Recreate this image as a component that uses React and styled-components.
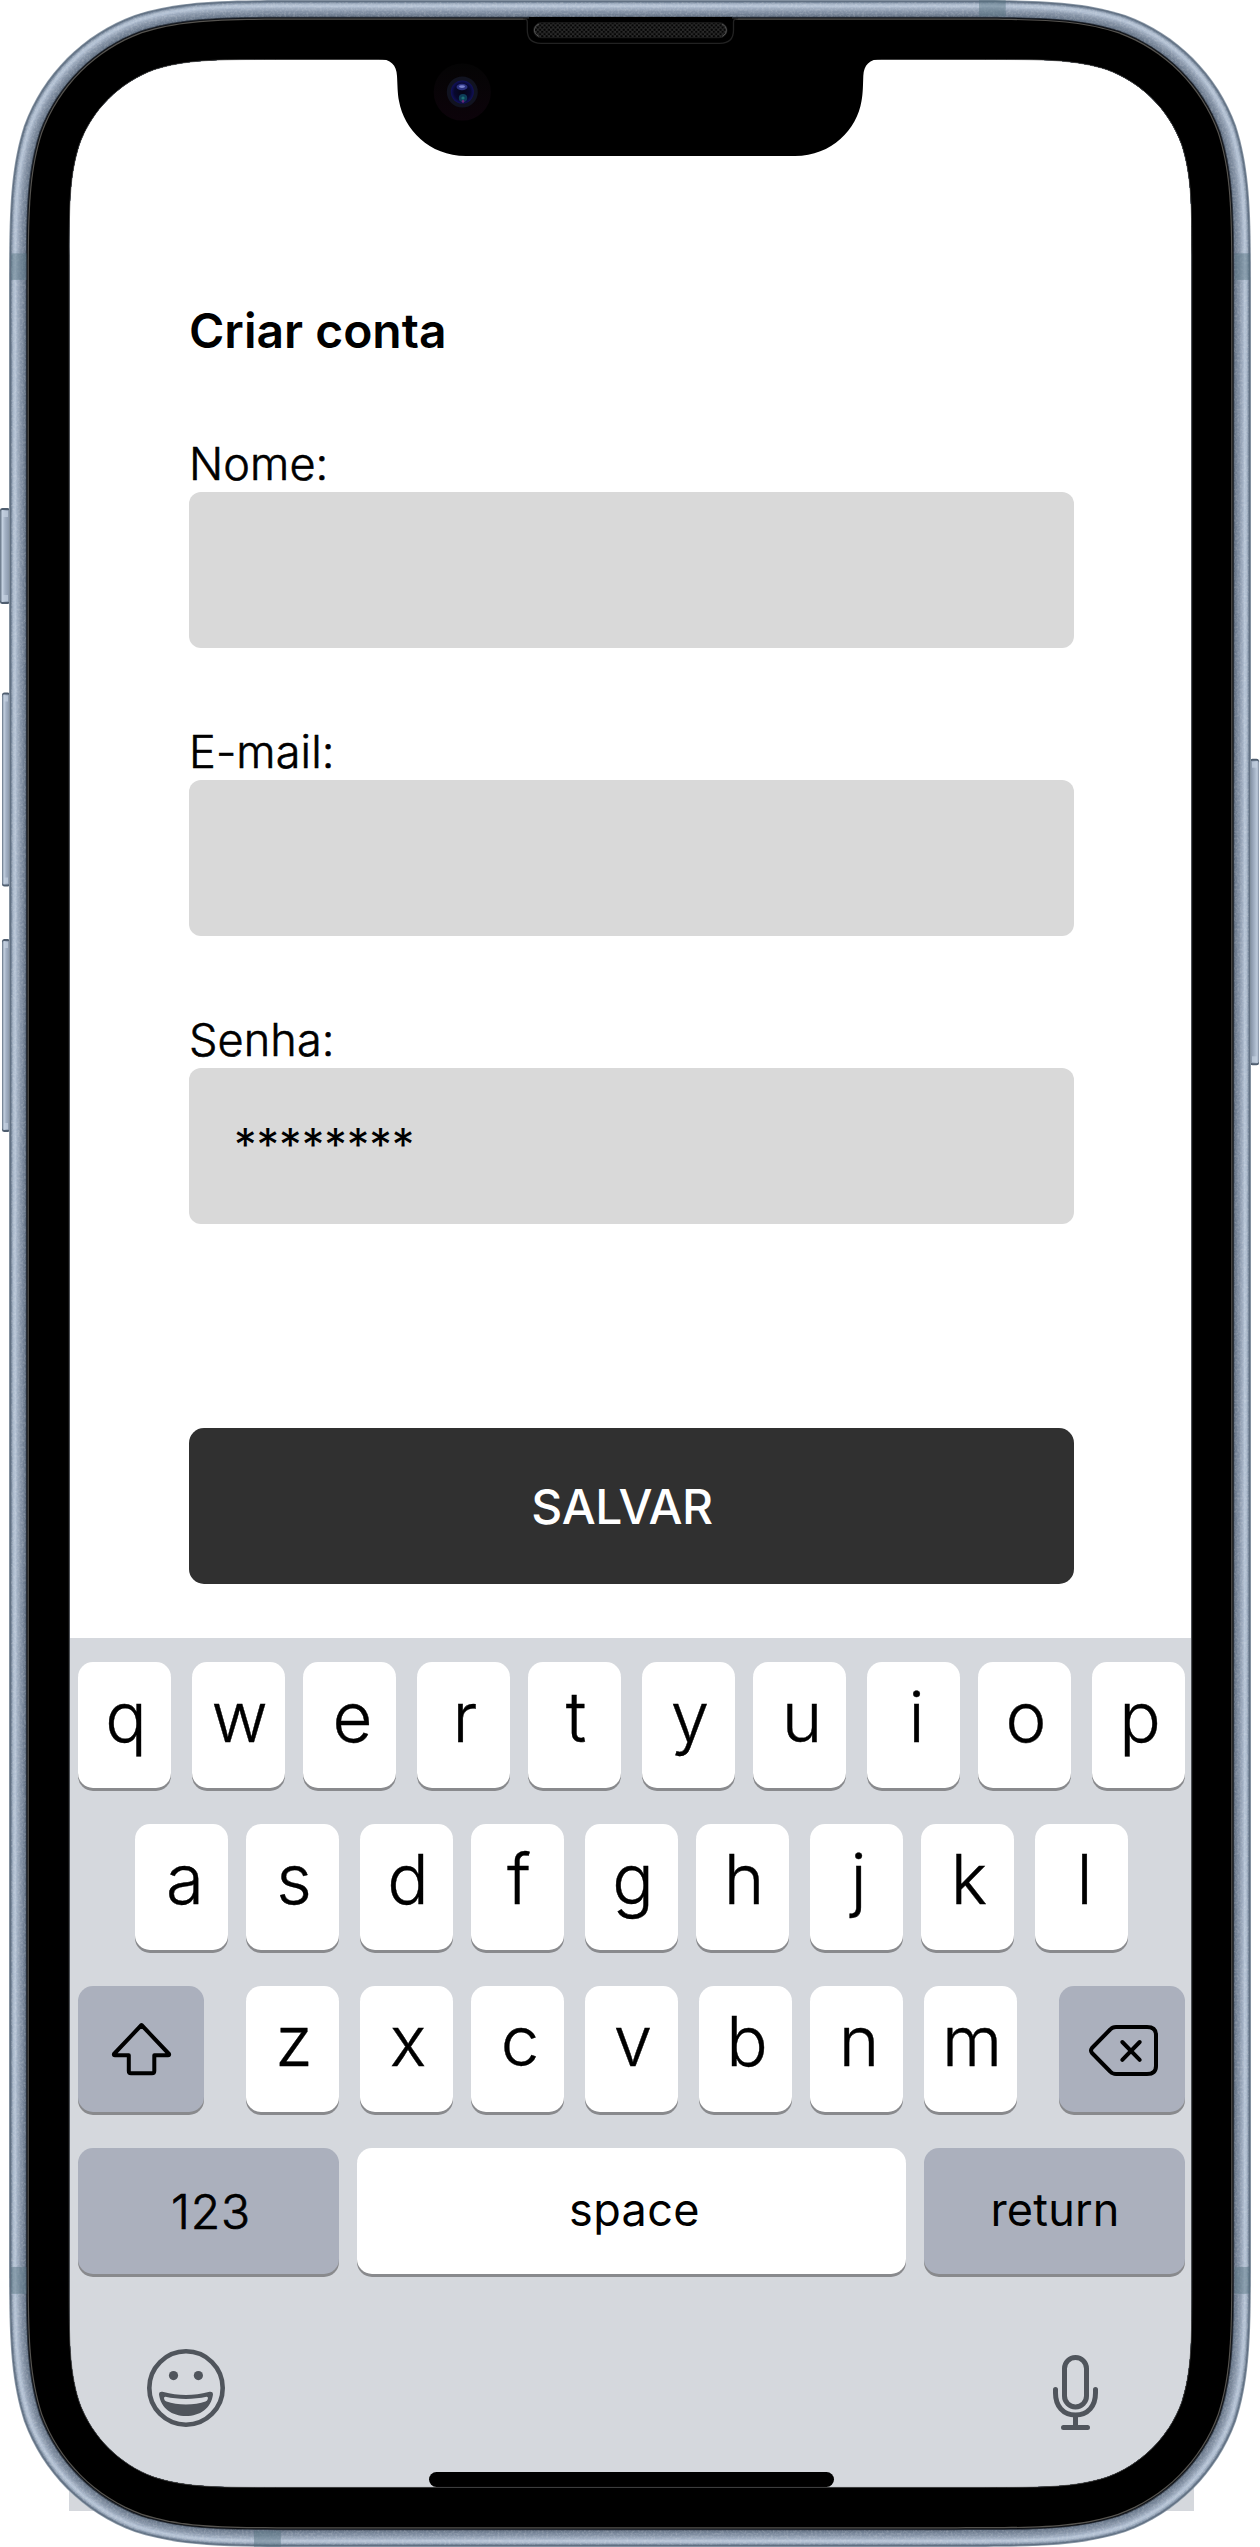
import React from "react";
import styled, { createGlobalStyle } from "styled-components";

const GlobalStyle = createGlobalStyle`
  *, *::before, *::after { box-sizing: border-box; }
  body { margin: 0; background: #fff; }
`;

const font = `Inter, "Liberation Sans", sans-serif`;

const Device = styled.main`
  position: relative;
  width: 1260px;
  height: 2547px;
  padding: 0 66px 0 69px;
  overflow: hidden;
  background: #fff;
  color: #000;
  font-family: ${font};
`;

const Screen = styled.div`
  display: flex;
  flex-direction: column;
  width: 1125px;
  height: 2511px;
`;

const Form = styled.form`
  display: flex;
  flex-direction: column;
  gap: 77px;
  height: 1638px;
  padding: 302px 120px 0;
`;

const Title = styled.h1`
  margin: 0;
  font-size: 48px;
  font-weight: 600;
  line-height: 58px;
`;

const Field = styled.label`
  display: flex;
  flex-direction: column;
`;

const FieldLabel = styled.span`
  height: 55px;
  font-size: 45px;
  font-weight: 300;
  line-height: 53px;
  letter-spacing: 0.1px;
  -webkit-text-stroke: 0.6px currentColor;
`;

const FieldBox = styled.span`
  display: flex;
  align-items: center;
  height: 156px;
  padding: 0 0 4px 45px;
  border-radius: 12px;
  background: #d9d9d9;
  font-size: 45px;
  font-weight: 400;
  line-height: 55px;
`;

const SaveButton = styled.button`
  height: 156px;
  margin: 127px 0 0;
  padding: 2px 19px 0 0;
  border: 0;
  border-radius: 15px;
  background: #303030;
  color: #fff;
  font-family: inherit;
  font-size: 48px;
  font-weight: 500;
  line-height: 58px;
  letter-spacing: -0.5px;
`;

const Keyboard = styled.section`
  display: flex;
  flex-direction: column;
  gap: 36px;
  height: 873px;
  padding: 24px 9px 0;
  background: #d5d8dd;
`;

const KeyRow = styled.div`
  display: flex;
  height: 126px;
  padding-left: ${(p) => p.$indent || 0}px;
`;

const Key = styled.button`
  display: flex;
  flex: none;
  justify-content: center;
  align-items: ${(p) => (p.$icon ? "center" : "flex-start")};
  width: ${(p) => p.$width || 93}px;
  height: 126px;
  margin: 0 0 0 ${(p) => p.$before || 0}px;
  padding: ${(p) => p.$top || 0}px 0 0 ${(p) => p.$shift || 0}px;
  border: 0;
  border-radius: 15px;
  background: ${(p) => (p.$dark ? "#abb0bd" : "#fff")};
  box-shadow: 0 3px 0 #898a8d;
  color: #000;
  font-family: inherit;
  font-size: ${(p) => p.$size || 69}px;
  font-weight: ${(p) => p.$weight || 300};
  letter-spacing: ${(p) => p.$spacing || 0}px;
  line-height: 1.21;
  -webkit-text-stroke: ${(p) => p.$stroke || 0}px currentColor;
`;

const KeyboardFooter = styled.div`
  display: flex;
  justify-content: space-between;
  align-items: flex-end;
  height: 120px;
  padding: 39px 87px 0 69px;
`;

const HomeIndicator = styled.div`
  align-self: center;
  width: 405px;
  height: 15px;
  margin-top: 6px;
  border-radius: 8px;
  background: #000;
`;

const Frame = styled.svg`
  position: absolute;
  inset: 0;
  pointer-events: none;
`;

const Icon = styled.svg`
  display: block;
  flex: none;
  margin-bottom: ${(p) => p.$lift || 0}px;
  overflow: visible;
`;

/* Rounded rectangle with continuous-curvature corners. */
function squircle(x0, y0, x1, y1, r) {
  const a = 1.52866 * r, b = 1.08849 * r, c = 0.86841 * r;
  const d = 0.63149 * r, e = 0.07491 * r, f = 0.37282 * r, g = 0.16906 * r;
  return [
    `M${x0 + a} ${y0} H${x1 - a}`,
    `C${x1 - b} ${y0} ${x1 - c} ${y0} ${x1 - d} ${y0 + e}`,
    `C${x1 - f} ${y0 + g} ${x1 - g} ${y0 + f} ${x1 - e} ${y0 + d}`,
    `C${x1} ${y0 + c} ${x1} ${y0 + b} ${x1} ${y0 + a} V${y1 - a}`,
    `C${x1} ${y1 - b} ${x1} ${y1 - c} ${x1 - e} ${y1 - d}`,
    `C${x1 - g} ${y1 - f} ${x1 - f} ${y1 - g} ${x1 - d} ${y1 - e}`,
    `C${x1 - c} ${y1} ${x1 - b} ${y1} ${x1 - a} ${y1} H${x0 + a}`,
    `C${x0 + b} ${y1} ${x0 + c} ${y1} ${x0 + d} ${y1 - e}`,
    `C${x0 + f} ${y1 - g} ${x0 + g} ${y1 - f} ${x0 + e} ${y1 - d}`,
    `C${x0} ${y1 - c} ${x0} ${y1 - b} ${x0} ${y1 - a} V${y0 + a}`,
    `C${x0} ${y0 + b} ${x0} ${y0 + c} ${x0 + e} ${y0 + d}`,
    `C${x0 + g} ${y0 + f} ${x0 + f} ${y0 + g} ${x0 + d} ${y0 + e}`,
    `C${x0 + c} ${y0} ${x0 + b} ${y0} ${x0 + a} ${y0}Z`,
  ].join(" ");
}

const bands = [
  [0, "#8d9aa8"], [0.8, "#617082"], [2, "#76869a"], [3, "#98a7ba"], [4.2, "#b0bed0"],
  [5.6, "#b5c3d5"], [7, "#a9b7ca"], [8.3, "#9ba9bc"], [9.7, "#909eb1"], [11, "#8593a6"],
  [12.5, "#7c8a9d"], [14, "#728093"], [15.5, "#687689"], [16.8, "#2a323d"],
  [17.8, "#0c0e12"], [18.6, "#55534f"], [19.8, "#000"],
];

const screenPath = squircle(69.2, 59.5, 1191.8, 2487.4, 135);
const notchPath =
  "M378 59 C391 59 396.5 65 397 76 C397.5 84 397.5 94 399 101 C404 129 429 156 466 156 H795 C832 156 857 129 861.5 101 C863 94 863 84 863.3 76 C864 65 869 59 882 59Z";

const antennas = [
  [11, 253.3, 15.5, 26.6], [1234.5, 253.3, 15.5, 26.6],
  [11, 2267, 15.5, 26.8], [1234.5, 2267, 15.5, 26.8],
  [979, 0, 26.7, 16.5], [254, 2530.5, 26.8, 16.5],
];

const sideButtons = [
  { x: 0, y: 508, w: 10, h: 96 },
  { x: 2, y: 692.5, w: 8, h: 194 },
  { x: 2, y: 939, w: 8, h: 193 },
  { x: 1250, y: 758.7, w: 9, h: 306.6, right: true },
];

function PhoneFrame() {
  return (
    <Frame width="1260" height="2547" viewBox="0 0 1260 2547" aria-hidden="true">
      <defs>
        <clipPath id="body">
          <path clipRule="evenodd" d={`M0 0H1260V2547H0Z ${screenPath}`} />
        </clipPath>
        <clipPath id="metal">
          <path clipRule="evenodd" d={`${squircle(11, 2, 1249, 2545, 197)} ${squircle(26, 17, 1234, 2530, 182)}`} />
        </clipPath>
        <linearGradient id="leftButton" x1="0" x2="1" y1="0" y2="0">
          <stop offset="0" stopColor="#5f6e7f" />
          <stop offset=".25" stopColor="#c3d0e0" />
          <stop offset=".5" stopColor="#a4b2c5" />
          <stop offset="1" stopColor="#8593a6" />
        </linearGradient>
        <linearGradient id="rightButton" x1="0" x2="1" y1="0" y2="0">
          <stop offset="0" stopColor="#7f8da0" />
          <stop offset=".5" stopColor="#a4b2c5" />
          <stop offset=".8" stopColor="#becbdc" />
          <stop offset="1" stopColor="#7d8b9d" />
        </linearGradient>
        <filter id="grain" x="0" y="0" width="100%" height="100%">
          <feTurbulence type="fractalNoise" baseFrequency=".45" numOctaves="2" seed="4" />
          <feColorMatrix values="0 0 0 0 1  0 0 0 0 1  0 0 0 0 1  .9 0 0 0 -.36" />
        </filter>
        <pattern id="mesh" width="4.4" height="4.4" patternUnits="userSpaceOnUse">
          <rect width="4.4" height="4.4" fill="#2b2b2b" />
          <circle cx="1.1" cy="1.1" r="1.2" fill="#040404" />
          <circle cx="3.3" cy="3.3" r="1.2" fill="#040404" />
        </pattern>
        <radialGradient id="lens">
          <stop offset="0" stopColor="#050514" />
          <stop offset=".7" stopColor="#08082e" />
          <stop offset="1" stopColor="#11115c" />
        </radialGradient>
        <linearGradient id="camera" x1="0" x2="0" y1="0" y2="1">
          <stop offset="0" stopColor="#040404" />
          <stop offset="1" stopColor="#0c030a" />
        </linearGradient>
      </defs>

      {sideButtons.map((b) => (
        <g key={b.y}>
          <rect x={b.x} y={b.y} width={b.w} height={b.h} rx="2.5" fill="#4f5e6f" />
          <rect x={b.x} y={b.y + 2} width={b.w} height={b.h - 4} rx="2" fill={`url(#${b.right ? "rightButton" : "leftButton"})`} />
          <rect x={b.x + 2} y={b.y + 3} width={b.w - 4} height="6" fill="#c3d0e0" opacity=".7" />
          <rect x={b.x + 2} y={b.y + b.h - 9} width={b.w - 4} height="6" fill="#c3d0e0" opacity=".7" />
        </g>
      ))}

      <g clipPath="url(#body)">
        {bands.map(([inset, color]) => (
          <path key={inset} fill={color} d={squircle(9 + inset, inset, 1251 - inset, 2547 - inset, 199 - inset)} />
        ))}
        <g clipPath="url(#metal)">
          <rect width="1260" height="2547" filter="url(#grain)" opacity=".45" />
        </g>
      </g>

      {antennas.map(([x, y, w, h]) => (
        <rect key={`${x}-${y}`} x={x} y={y} width={w} height={h} fill="#54707f" opacity=".45" />
      ))}

      <path d={screenPath} fill="none" stroke="#555" strokeWidth=".6" />
      <path d={notchPath} fill="#000" />

      <path d="M523 18.5 Q527.3 18.5 527.3 22 V30 Q527.3 43.3 541 43.3 H720 Q733.5 43.3 733.5 30 V22 Q733.5 18.5 738 18.5" fill="#000" stroke="#222" strokeWidth="1.3" />
      <rect x="529" y="17" width="203" height="6" fill="#000" />
      <rect x="533.7" y="22.7" width="193.3" height="15" rx="7.5" fill="url(#mesh)" stroke="#1d1d1d" />
      <path d="M539 24 Q534.5 26 534.5 30.2 T539 36.4 M722 24 Q726.3 26 726.3 30.2 T722 36.4" fill="none" stroke="#555" />

      <circle cx="462.3" cy="92" r="28.6" fill="url(#camera)" />
      <circle cx="462.3" cy="92" r="15.5" fill="#111320" />
      <circle cx="462.3" cy="92" r="11.5" fill="url(#lens)" />
      <ellipse cx="462" cy="87" rx="5.5" ry="3.2" fill="#2c3280" />
      <ellipse cx="462" cy="86.6" rx="3" ry="1.3" fill="#7a82cc" />
      <ellipse cx="463" cy="98" rx="4.2" ry="4" fill="#0d3c58" />
      <circle cx="463" cy="98" r="1.6" fill="#1f7074" />
      <circle cx="463" cy="101.4" r="1.3" fill="#6a2a7a" />
    </Frame>
  );
}

const ShiftIcon = () => (
  <Icon width="59" height="52" viewBox="0 0 59 52" fill="none" stroke="#000" strokeWidth="4" strokeLinejoin="round">
    <path d="M29.5 2 L57 31 Q57.5 32.3 56 32.3 H42.3 V48 Q42.3 50.2 40 50.2 H19 Q16.8 50.2 16.8 48 V32.3 H3 Q1.5 32.3 2 31 Z" />
  </Icon>
);

const BackspaceIcon = () => (
  <Icon width="69" height="51" viewBox="0 0 69 51" fill="none" stroke="#000" strokeWidth="4" strokeLinecap="round" strokeLinejoin="round">
    <path d="M27 2 H58 Q67 2 67 10 V41 Q67 49 58 49 H27 Q23.5 49 21.2 46.5 L3 28 Q1 25.5 3 23 L21.2 4.5 Q23.5 2 27 2Z" />
    <path d="M33.3 17 L50.7 34.8 M50.7 17 L33.3 34.8" />
  </Icon>
);

const SmileIcon = () => (
  <Icon $lift={3} width="78" height="78" viewBox="-39 -39 78 78" fill="#50555c">
    <circle r="36.7" fill="none" stroke="#50555c" strokeWidth="4.6" />
    <circle cx="-12.5" cy="-12.4" r="4.6" />
    <circle cx="12.4" cy="-12.4" r="4.6" />
    <path
      fillRule="evenodd"
      d="M-27 6.5 C-27 3.8 -25 3.4 -22.5 4.1 C-8 8 8 8 22.5 4.1 C25 3.4 27 3.8 27 6.5 C25 20.5 14 28 0 28 C-14 28 -25 20.5 -27 6.5Z M-20.5 8.8 C-8 11.6 8 11.6 20.5 8.8 C22.8 8.6 22.2 12.6 19.5 13.6 C9 17.4 -9 17.4 -19.5 13.6 C-22.2 12.6 -22.8 8.6 -20.5 8.8Z"
    />
  </Icon>
);

const MicIcon = () => (
  <Icon width="45" height="75" viewBox="0 0 45 75" fill="none" stroke="#50555c" strokeWidth="5" strokeLinecap="round">
    <rect x="11.5" y="2.5" width="22" height="49.5" rx="11" />
    <path d="M2.5 34.5 V38 C2.5 51 10 60 22.5 60 C35 60 42.5 51 42.5 38 V34.5 M22.5 60 V72 M10.5 72.5 H34.5" />
  </Icon>
);

/* Each letter key: glyph, space before the key, left padding that nudges the glyph. */
const rows = [
  {
    indent: 0,
    keys: [["q", 0, 3], ["w", 21, 2], ["e", 18, 6], ["r", 21, 3], ["t", 18, 3], ["y", 21, 3], ["u", 18, 5], ["i", 21, 6], ["o", 18, 3], ["p", 21, 3]],
  },
  {
    indent: 57,
    keys: [["a", 0, 7], ["s", 18, 3], ["d", 21, 3], ["f", 18, 3], ["g", 21, 3], ["h", 18, 3], ["j", 21, 4], ["k", 18, 3], ["l", 21, 6]],
  },
];
const bottomLetters = [["z", 42, 3], ["x", 21, 3], ["c", 18, 5], ["v", 21, 3], ["b", 21, 3], ["n", 18, 5], ["m", 21, 3]];

const LetterKey = ({ letter, before, shift }) => (
  <Key type="button" $before={before} $top={14} $shift={shift} $stroke={0.4}>{letter}</Key>
);

export default function App() {
  return (
    <>
      <GlobalStyle />
      <Device>
        <Screen>
          <Form>
            <Title>Criar conta</Title>
            <Field>
              <FieldLabel>Nome:</FieldLabel>
              <FieldBox />
            </Field>
            <Field>
              <FieldLabel>E-mail:</FieldLabel>
              <FieldBox />
            </Field>
            <Field>
              <FieldLabel>Senha:</FieldLabel>
              <FieldBox>********</FieldBox>
            </Field>
            <SaveButton type="button">SALVAR</SaveButton>
          </Form>
          <Keyboard>
            {rows.map((row) => (
              <KeyRow key={row.indent} $indent={row.indent}>
                {row.keys.map(([letter, before, shift]) => (
                  <LetterKey key={letter} letter={letter} before={before} shift={shift} />
                ))}
              </KeyRow>
            ))}
            <KeyRow>
              <Key type="button" aria-label="shift" $dark $icon $width={126}><ShiftIcon /></Key>
              {bottomLetters.map(([letter, before, shift]) => (
                <LetterKey key={letter} letter={letter} before={before} shift={shift} />
              ))}
              <Key type="button" aria-label="delete" $dark $icon $width={126} $before={42} $top={3} $shift={3}><BackspaceIcon /></Key>
            </KeyRow>
            <KeyRow>
              <Key type="button" $dark $width={261} $size={48} $top={35} $shift={5} $spacing={0.8} $stroke={0.7}>123</Key>
              <Key type="button" $width={549} $before={18} $size={45} $weight={400} $top={35} $shift={6} $spacing={0.4}>space</Key>
              <Key type="button" $dark $width={261} $before={18} $size={45} $weight={400} $top={35} $shift={1} $spacing={0.2}>return</Key>
            </KeyRow>
            <KeyboardFooter>
              <SmileIcon />
              <MicIcon />
            </KeyboardFooter>
            <HomeIndicator />
          </Keyboard>
        </Screen>
        <PhoneFrame />
      </Device>
    </>
  );
}
